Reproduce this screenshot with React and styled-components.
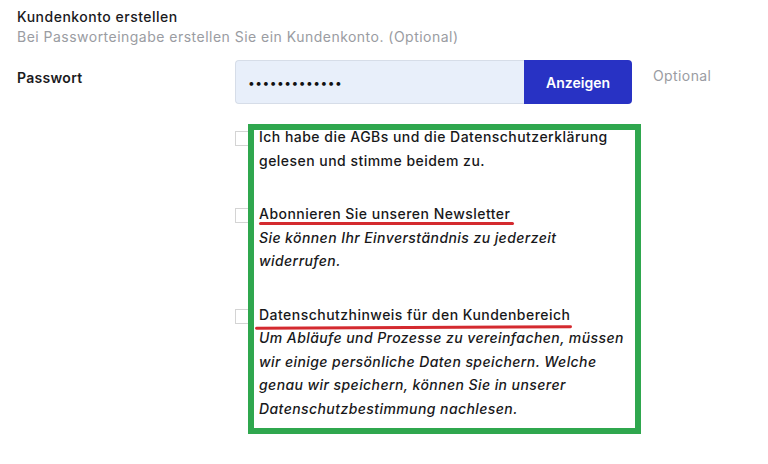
import styled, { createGlobalStyle } from "styled-components";

const GlobalStyle = createGlobalStyle`
  html, body {
    margin: 0;
    padding: 0;
    background: #ffffff;
  }
  body {
    font-family: Inter, "Noto Sans", "Liberation Sans", sans-serif;
    color: #1d1d1f;
    -webkit-font-smoothing: antialiased;
  }
`;

const Page = styled.form`
  width: 768px;
  height: 464px;
  box-sizing: border-box;
  padding: 7px 0 0 17px;
  overflow: hidden;
`;

const Heading = styled.h3`
  margin: 0;
  font-size: 14px;
  font-weight: 500;
  line-height: 20px;
  letter-spacing: 0.5px;
  color: #1a1a1d;
`;

const Hint = styled.p`
  margin: 0;
  font-size: 14px;
  font-weight: 400;
  line-height: 20px;
  letter-spacing: 0.48px;
  color: #9a9ca2;
`;

const FieldRow = styled.div`
  display: grid;
  grid-template-columns: 218px auto auto;
  justify-content: start;
  margin-top: 13px;
`;

const Label = styled.label`
  padding-top: 8px;
  font-size: 14px;
  font-weight: 600;
  line-height: 20px;
  letter-spacing: 0.3px;
  color: #1a1a1d;
`;

const InputGroup = styled.div`
  display: flex;
  width: 397px;
  height: 44px;
`;

const PasswordInput = styled.input`
  flex: 1;
  min-width: 0;
  box-sizing: border-box;
  height: 44px;
  margin: 0;
  padding: 0 12px;
  border: 1px solid #d6dde8;
  border-right: none;
  border-radius: 4px 0 0 4px;
  background: #e8effa;
  font-family: Inter, "Noto Sans", sans-serif;
  font-size: 12px;
  letter-spacing: 0.5px;
  color: #111;
  outline: none;
`;

const ShowButton = styled.button`
  width: 108px;
  height: 44px;
  margin: 0;
  border: none;
  border-radius: 0 4px 4px 0;
  background: #2832c4;
  color: #ffffff;
  font-family: Inter, "Noto Sans", sans-serif;
  font-size: 14px;
  font-weight: 600;
  cursor: pointer;
`;

const OptionalTag = styled.span`
  margin-left: 21px;
  padding-top: 6px;
  font-size: 14px;
  line-height: 20px;
  letter-spacing: 0.4px;
  color: #9a9ca2;
`;

const Consents = styled.div`
  position: relative;
  display: flex;
  flex-direction: column;
  gap: 30px;
  margin: 21px 0 0 218px;
`;

const Consent = styled.div`
  display: grid;
  grid-template-columns: 24px 372px;
  align-items: start;
`;

const Checkbox = styled.input.attrs({ type: "checkbox" })`
  appearance: none;
  width: 15px;
  height: 15px;
  margin: 6px 0 0 0;
  border: 1px solid #d4d4d4;
  background: #fff;
  box-sizing: border-box;
`;

const ConsentText = styled.div`
  font-size: 14px;
  font-weight: 500;
  line-height: 23.5px;
  letter-spacing: 0.47px;
  color: #18181a;
`;

const Note = styled.div`
  font-style: italic;
  letter-spacing: 0.42px;
`;

const Marked = styled.span`
  position: relative;

  &::after {
    content: "";
    position: absolute;
    left: ${p => p.$left}px;
    right: ${p => p.$right}px;
    top: ${p => p.$top}px;
    height: 3px;
    border-radius: 2px;
    background: #d42a2f;
    transform: rotate(${p => p.$tilt || 0}deg);
  }
`;

const Frame = styled.div`
  position: absolute;
  left: 13px;
  top: -1px;
  width: 393px;
  height: 310px;
  box-sizing: border-box;
  border: 6px solid #2fa74e;
  pointer-events: none;
`;

const App = () => {
  return (
    <Page onSubmit={e => e.preventDefault()}>
      <GlobalStyle />
      <Heading>Kundenkonto erstellen</Heading>
      <Hint>Bei Passworteingabe erstellen Sie ein Kundenkonto. (Optional)</Hint>

      <FieldRow>
        <Label htmlFor="pw">Passwort</Label>
        <InputGroup>
          <PasswordInput id="pw" type="password" defaultValue="geheim1234567" readOnly />
          <ShowButton type="button">Anzeigen</ShowButton>
        </InputGroup>
        <OptionalTag>Optional</OptionalTag>
      </FieldRow>

      <Consents>
        <Consent>
          <Checkbox />
          <ConsentText>
            Ich habe die AGBs und die Datenschutzerklärung gelesen und stimme beidem zu.
          </ConsentText>
        </Consent>

        <Consent>
          <Checkbox />
          <ConsentText>
            <Marked $left={0} $right={-4} $top={17}>
              Abonnieren Sie unseren Newsletter
            </Marked>
            <Note>Sie können Ihr Einverständnis zu jederzeit widerrufen.</Note>
          </ConsentText>
        </Consent>

        <Consent>
          <Checkbox />
          <ConsentText>
            <Marked $left={-4} $right={-2} $top={20} $tilt={-0.3}>
              Datenschutzhinweis für den Kundenbereich
            </Marked>
            <Note>
              Um Abläufe und Prozesse zu vereinfachen, müssen wir einige persönliche
              Daten speichern. Welche genau wir speichern, können Sie in unserer
              Datenschutzbestimmung nachlesen.
            </Note>
          </ConsentText>
        </Consent>

        <Frame />
      </Consents>
    </Page>
  );
};

export default App;
